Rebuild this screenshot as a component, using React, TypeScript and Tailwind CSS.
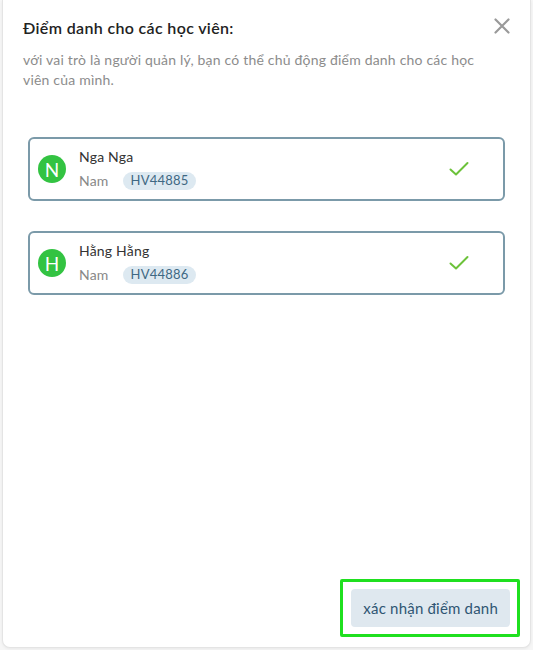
import React from 'react';

type Student = {
  name: string;
  initial: string;
  gender: string;
  code: string;
};

const students: Student[] = [
  { name: 'Nga Nga', initial: 'N', gender: 'Nam', code: 'HV44885' },
  { name: 'Hằng Hằng', initial: 'H', gender: 'Nam', code: 'HV44886' },
];

const CheckIcon: React.FC = () => (
  <svg width="20" height="16" viewBox="0 0 20 16" fill="none">
    <path d="M1.5 8.5 L7 13.5 L18.5 2" stroke="#6cc23a" strokeWidth="2" strokeLinecap="round" strokeLinejoin="round" />
  </svg>
);

const StudentRow: React.FC<{ student: Student }> = ({ student }) => (
  <div className="flex items-center h-[64px] border-2 border-[#7b9aa9] rounded-[6px] pl-[8px] pr-[34px]">
    <div className="w-[28px] h-[28px] rounded-full bg-[#33c342] text-white flex items-center justify-center text-[19px] leading-none">
      {student.initial}
    </div>
    <div className="ml-[13px] flex-1 flex flex-col">
      <span className="text-[14px] leading-[20px] tracking-[0.2px] text-[#333]">{student.name}</span>
      <div className="flex items-center mt-[4px]">
        <span className="text-[14px] leading-[20px] tracking-[0.2px] text-[#888]">{student.gender}</span>
        <span className="ml-[14px] px-[8px] h-[18px] flex items-center rounded-full bg-[#dde9f1] text-[13px] tracking-[0.2px] text-[#3f6883]">
          {student.code}
        </span>
      </div>
    </div>
    <CheckIcon />
  </div>
);

export default function App() {
  return (
    <div className="w-[533px] h-[650px] bg-[#f6f6f6] font-['Lato',sans-serif]">
      <div className="ml-[2px] w-[529px] h-[648px] bg-white border border-t-0 border-[#e4e4e4] rounded-b-[8px] shadow-[0_1px_3px_rgba(0,0,0,0.06)] flex flex-col px-[20px] pt-[16px] pb-[10px]">
        <div className="flex items-start justify-between">
          <h2 className="text-[16px] leading-[24px] font-semibold tracking-[0.35px] text-[#222]">Điểm danh cho các học viên:</h2>
          <button className="mt-[2px] mr-0">
            <svg width="16" height="16" viewBox="0 0 16 16">
              <path d="M1.5 1.5 L14.5 14.5 M14.5 1.5 L1.5 14.5" stroke="#9a9a9a" strokeWidth="2.2" strokeLinecap="round" />
            </svg>
          </button>
        </div>
        <p className="mt-[10px] text-[14px] leading-[20px] tracking-[0.2px] text-[#8c8c8c] pr-[30px]">
          với vai trò là người quản lý, bạn có thể chủ động điểm danh cho các học viên của mình.
        </p>
        <div className="mt-[47px] px-[5px] flex flex-col gap-[30px]">
          {students.map((s) => (
            <StudentRow key={s.code} student={s} />
          ))}
        </div>
        <div className="mt-auto flex justify-end mr-[-10px]">
          <div className="border-[3px] border-[#1fe01f] rounded-[2px] pl-[8px] pr-[7px] py-[7px]">
            <button className="h-[38px] px-[12px] rounded-[4px] bg-[#dfe8ef] text-[15px] tracking-[0.2px] text-[#2f5673]">
              xác nhận điểm danh
            </button>
          </div>
        </div>
      </div>
    </div>
  );
}
